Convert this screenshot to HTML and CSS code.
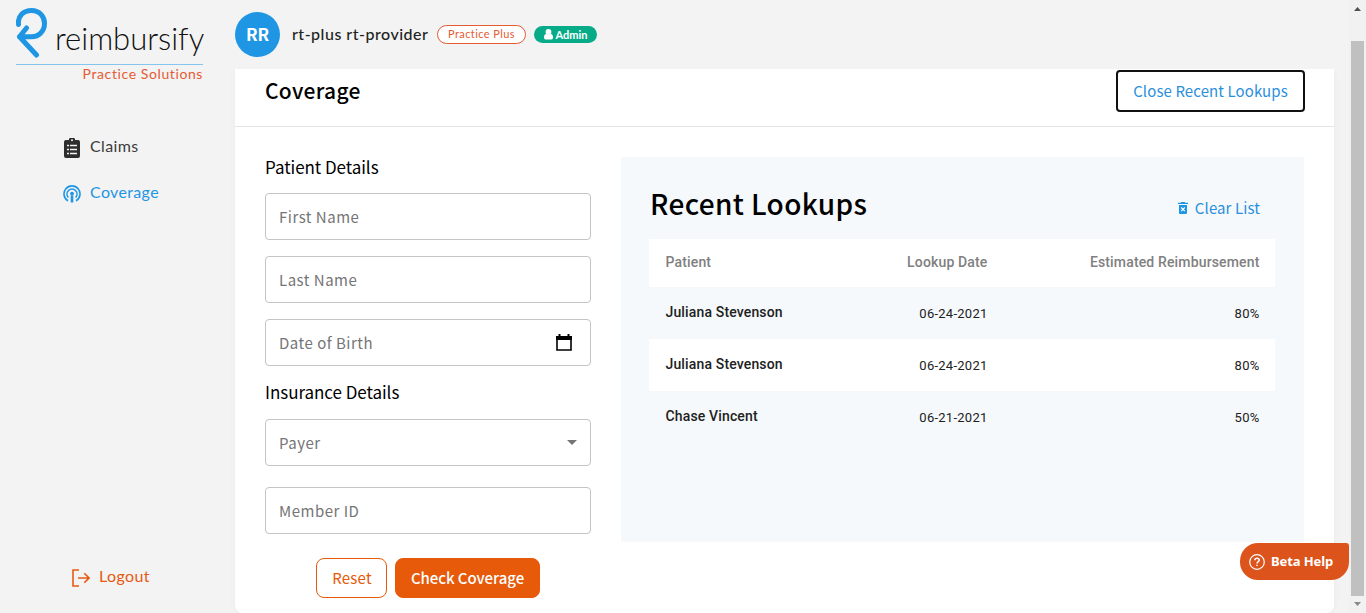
FILE: index.html
```html
<!DOCTYPE html>
<html lang="en">
<head>
<meta charset="utf-8">
<title>Reimbursify - Coverage</title>
<link rel="stylesheet" href="styles.css">
</head>
<body>
<div class="app">
  <aside class="sidebar">
    <div class="logo">
      <svg class="logo-mark" width="34" height="52" viewBox="0 0 34 52" fill="none" stroke="#1e96e4" stroke-width="5" stroke-linecap="round" stroke-linejoin="round"><path d="M2.500 17.500C1.500 9 7.500 3.500 15.500 3.500C23.500 3.500 28.500 9.500 28.500 16.500C28.500 24 23 29.700 15.500 29.700H3.500L10.500 21M3.500 29.700L20.500 48"/></svg>
      <span class="logo-name">reimbursify</span>
    </div>
    <div class="logo-sub">Practice Solutions</div>
    <nav class="nav">
      <a class="nav-item"><svg width="16" height="20" viewBox="0 0 16 20"><path fill="#2d2d2d" d="M2 2H5A3 3 0 0 1 11 2H14Q16 2 16 4V18Q16 20 14 20H2Q0 20 0 18V4Q0 2 2 2Z"/><circle cx="8" cy="2.300" r="1" fill="#f3f3f3"/><path stroke="#f3f3f3" stroke-width="1.500" d="M3 7.500H5M6 7.500H13M3 11.500H5M6 11.500H13M3 15.500H5M6 15.500H13"/></svg><span>Claims</span></a>
      <a class="nav-item active"><svg width="18" height="18" viewBox="0 0 18 18" fill="none" stroke="#1e96e4" stroke-width="1.600"><path d="M5 15.800A8 8 0 1 1 13 15.800M5.300 12.500A5 5 0 1 1 12.700 12.500"/><circle cx="9" cy="8.700" r="1.900" fill="#1e96e4" stroke="none"/><path stroke-width="2.600" d="M9 10.500V17.500"/></svg><span>Coverage</span></a>
    </nav>
    <a class="logout"><svg width="18" height="18" viewBox="0 0 18 18" fill="none" stroke="#e65a12" stroke-width="1.600"><path d="M7 1H1V17H7M6 9H17M12.300 4.300L17 9L12.300 13.700"/></svg><span>Logout</span></a>
  </aside>
  <main class="main">
    <header class="topbar">
      <div class="avatar">RR</div>
      <span class="user">rt-plus rt-provider</span>
      <span class="plan">Practice Plus</span>
      <span class="role"><svg width="9" height="11" viewBox="0 0 9 11"><circle cx="4.500" cy="3" r="2.900" fill="#fff"/><path fill="#fff" d="M0 8.500Q0 5.200 2.300 5Q4.500 6.500 6.700 5Q9 5.200 9 8.500Q9 10.500 7.500 10.500H1.500Q0 10.500 0 8.500Z"/></svg><span>Admin</span></span>
    </header>
    <section class="card">
      <div class="card-head"><h1>Coverage</h1><button class="close">Close Recent Lookups</button></div>
      <div class="card-body">
        <form class="form">
          <h2 class="patient-title">Patient Details</h2>
          <div class="field">First Name</div>
          <div class="field">Last Name</div>
          <div class="field date"><span>Date of Birth</span><svg width="16" height="18" viewBox="0 0 16 18"><path d="M1 3H15V16H1Z" fill="none" stroke="#000" stroke-width="1.600"/><path d="M0 2H16V6H0ZM2.500 0H4.500V3H2.500ZM11.500 0H13.500V3H11.500Z"/></svg></div>
          <h2 class="insurance-title">Insurance Details</h2>
          <div class="field payer"><span>Payer</span><svg width="10" height="5" viewBox="0 0 10 5"><path fill="#757575" d="M0 0H10L5 5Z"/></svg></div>
          <div class="field member">Member ID</div>
          <div class="actions"><button type="button" class="reset">Reset</button><button type="button" class="check">Check Coverage</button></div>
        </form>
        <section class="lookups">
          <div class="lookups-head"><h2>Recent Lookups</h2><a class="clear"><svg width="10" height="12" viewBox="0 0 10 12"><path fill="#1e96e4" d="M0 .7H2.700L3.300 0H6.700L7.300 .7H10V2H0ZM1 3H9V10.800Q9 12 7.800 12H2.200Q1 12 1 10.800Z"/><path stroke="#fff" stroke-width="1.200" d="M3.200 5.500L6.800 9.100M6.800 5.500L3.200 9.100"/></svg><span>Clear List</span></a></div>
          <table>
            <thead><tr><th>Patient</th><th>Lookup Date</th><th>Estimated Reimbursement</th></tr></thead>
            <tbody>
              <tr><td>Juliana Stevenson</td><td>06-24-2021</td><td>80%</td></tr>
              <tr><td>Juliana Stevenson</td><td>06-24-2021</td><td>80%</td></tr>
              <tr><td>Chase Vincent</td><td>06-21-2021</td><td>50%</td></tr>
            </tbody>
          </table>
        </section>
      </div>
    </section>
  </main>
  <div class="scrollbar">
    <svg width="7" height="4" viewBox="0 0 7 4"><path fill="#505050" d="M3.500 0L7 4H0Z"/></svg>
    <div class="thumb"></div>
    <svg width="7" height="4" viewBox="0 0 7 4"><path fill="#8a8a8a" d="M0 0H7L3.500 4Z"/></svg>
  </div>
  <a class="help"><svg width="16" height="16" viewBox="0 0 16 16" fill="none" stroke="#fff" stroke-width="1.200"><circle cx="8" cy="8" r="7.300"/><path stroke-width="1.500" d="M5.800 6.300Q5.900 4.200 8 4.200Q10.200 4.200 10.200 6.100Q10.200 7.200 9 7.900Q8 8.500 8 9.600M8 10.700V12.100"/></svg><span>Beta Help</span></a>
</div>
</body>
</html>
```
FILE: styles.css
```css
* { box-sizing: border-box; }
body { margin: 0; overflow: hidden; background: #f3f3f3; font-family: "Noto Sans CJK SC", "Noto Sans", sans-serif; }
h1, h2 { margin: 0; font-weight: 400; color: #000; }
svg { display: block; flex: none; }
button { font-family: inherit; padding: 0; }
span, a, h1, h2, button { white-space: nowrap; }
.app { position: relative; display: flex; width: 1366px; height: 613px; overflow: hidden; }

.sidebar { width: 235px; flex: none; display: flex; flex-direction: column; font-family: Lato, sans-serif; }
.logo { display: flex; width: 187px; height: 59px; margin-left: 16px; padding-top: 7px; }
.logo-name { margin: 10px 0 0 5px; font-size: 31px; line-height: 42px; font-weight: 300; letter-spacing: 0; color: #111; }
.logo-sub { width: 187px; margin: 5px 0 0 16px; border-top: 1px solid #85c5ef; font-size: 14px; line-height: 18px; letter-spacing: .6px; text-align: right; color: #e65a32; }
.nav { display: flex; flex-direction: column; gap: 22px; margin: 51px 0 0 63px; }
.nav-item { display: flex; align-items: center; gap: 10px; height: 24px; font-size: 16px; letter-spacing: .35px; color: #3c3c3c; }
.nav-item:first-child { padding-left: 1px; }
.nav-item svg { margin-top: 4px; }
.nav-item span, .logout span { margin-bottom: 1px; }
.active { color: #1e96e4; gap: 9px; }
.logout { display: flex; align-items: center; gap: 9px; margin: auto 0 25px 72px; height: 24px; font-size: 16px; letter-spacing: .4px; color: #e65a12; }
.logout svg { margin-top: 4px; }

.main { width: 1099px; flex: none; }
.topbar { height: 69px; display: flex; align-items: center; font-family: Lato, sans-serif; }
.avatar { width: 45px; height: 45px; border-radius: 50%; background: #1e96e4; color: #fff; font: 700 17px/43px "Noto Sans CJK SC", sans-serif; text-align: center; }
.user { margin-left: 12px; margin-bottom: 2px; width: 145px; font-size: 16px; font-weight: 500; letter-spacing: .5px; color: #222; }
.plan { width: 89px; height: 19px; border: 1px solid #e65a32; border-radius: 10px; background: #fff; color: #e65a32; font-size: 11px; line-height: 16px; text-align: center; letter-spacing: .4px; }
.role { display: flex; align-items: center; justify-content: center; gap: 3px; width: 63px; height: 17px; margin-left: 8px; border-radius: 9px; background: #08ab88; color: #fff; font-size: 11px; font-weight: 700; line-height: 15px; }

.card { height: 544px; background: #fff; border-radius: 0 0 8px 8px; box-shadow: 0 0 8px rgba(0,0,0,.04); clip-path: inset(0 -8px 0 -8px); }
.card-head { display: flex; justify-content: space-between; height: 58px; padding: 1px 29px 0 30px; border-bottom: 1px solid #e4e4e4; }
h1 { font-size: 21px; line-height: 40px; font-weight: 500; letter-spacing: .3px; }
.close { width: 189px; height: 42px; padding-bottom: 2px; border: 2px solid #101010; border-radius: 4px; background: #fff; color: #2b8fdc; font-size: 15px; letter-spacing: .1px; }
.card-body { display: flex; justify-content: space-between; padding: 30px 30px 0; }
.form { width: 326px; }
.form h2 { font-size: 17px; line-height: 22px; letter-spacing: -.05px; }
.form .patient-title { margin-bottom: 16px; line-height: 20px; }
.insurance-title { margin: 15px 0 16px; }
.field { display: flex; align-items: center; justify-content: space-between; height: 47px; padding: 0 14px 1px 13px; border: 1px solid #c4c4c4; border-radius: 4px; font-size: 15px; letter-spacing: .5px; color: #757575; }
.field + .field { margin-top: 16px; }
.date svg { margin: 2px 4px 1px 0; }
.payer svg { margin: 0 -1px 0 0; }
.payer + .member { margin-top: 21px; }
.actions { display: flex; justify-content: center; gap: 8px; margin-top: 24px; }
.actions button { height: 40px; padding-bottom: 1px; border: 1px solid #e65a0a; border-radius: 8px; font-size: 15px; }
.actions .reset { width: 71px; padding-left: 1px; background: #fff; color: #e65a0a; letter-spacing: .2px; }
.actions .check { width: 145px; background: #e65a0a; color: #fff; font-weight: 500; letter-spacing: -.05px; }

.lookups { width: 683px; height: 385px; padding: 30px 29px 0 28px; background: #f5f9fc; }
.lookups-head { display: flex; justify-content: space-between; height: 52px; padding: 0 15px 0 1px; }
.lookups h2 { font-size: 28px; line-height: 32px; font-weight: 500; letter-spacing: .37px; }
.clear { display: flex; align-items: center; gap: 7px; height: 42px; font-size: 15px; letter-spacing: .1px; color: #2b8fdc; }
.clear span { margin-bottom: 2px; }
table { width: 626px; border-collapse: collapse; table-layout: fixed; font-family: Roboto, sans-serif; }
th, td { padding: 0 15.500px 0 16.500px; text-align: right; font-weight: 400; }
th:first-child { width: 196px; }
th:nth-child(2) { width: 158px; }
thead tr { height: 48px; background: #fff; }
th { padding-bottom: 2px; font-size: 14px; font-weight: 500; color: #808080; letter-spacing: .15px; }
tbody tr { height: 52px; }
tbody tr:nth-child(2) { background: #fff; }
td { font-size: 13px; color: #212121; letter-spacing: .25px; }
th:first-child, td:first-child { text-align: left; }
td:first-child { font-size: 14px; font-weight: 500; padding-bottom: 2px; letter-spacing: .15px; }

.scrollbar { width: 17px; margin-left: auto; padding: 7px 2px; display: flex; flex-direction: column; align-items: center; background: #f1f1f1; }
.thumb { flex: 1; width: 13px; margin: 30px 0 6px; background: #c0c0c0; }
.help { position: absolute; left: 1240px; top: 543px; display: flex; align-items: center; gap: 6px; width: 109px; height: 37px; padding-left: 9px; border-radius: 18px 3px 18px 18px; background: #dc541b; color: #fff; font: 700 13px/37px "Noto Sans", sans-serif; letter-spacing: -.1px; }
```
